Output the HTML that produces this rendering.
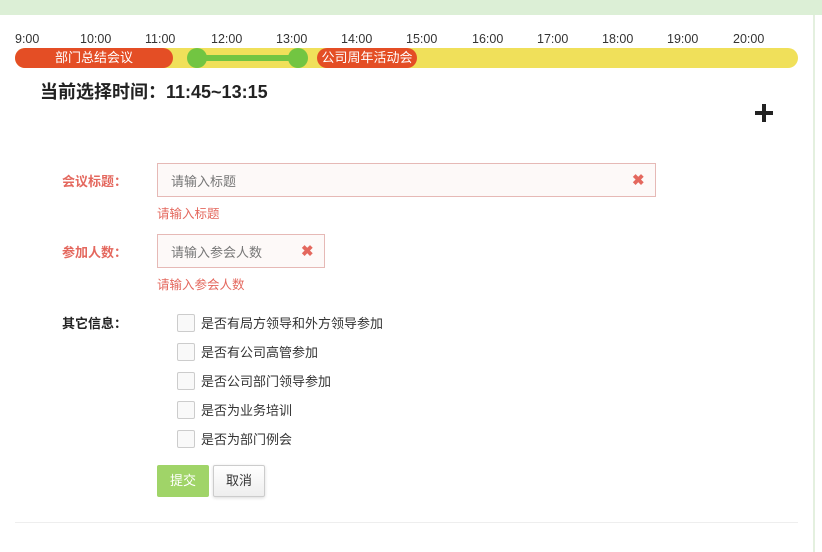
<!DOCTYPE html>
<html><head><meta charset="utf-8"><style>
*{margin:0;padding:0;box-sizing:border-box}
body{width:822px;height:552px;background:#fff;position:relative;overflow:hidden;font-family:"Liberation Sans","Noto Sans CJK SC",sans-serif;font-size:12px;color:#333}
.a{position:absolute}
.top{left:0;top:0;width:822px;height:15px;background:#dcefd6}
.rline{left:813px;top:15px;width:2px;height:537px;background:#e4f0df}
.h{top:32px;font-size:12.5px;color:#333}
.bar{left:15px;top:48px;width:783px;height:20px;background:#f0e05a;border-radius:10px}
.red{height:20px;top:48px;background:#e44e25;border-radius:10px;color:#fff;text-align:center;line-height:20px;font-size:13px}
.dot{width:20px;height:20px;border-radius:50%;background:#72c542;top:48px}
.lbl{font-size:13px;font-weight:bold}
.inp{border:1px solid #e6b9b6;background:#fdf9f8;height:34px;color:#777;font-size:13px;line-height:35px;padding-left:13px}
.x{color:#e4685e;font-size:15px;font-weight:bold}
.err{color:#e4685e;font-size:12.5px}
.cb{width:18px;height:18px;border:1px solid #ccc;background:#f9f9f9;border-radius:2px}
.ct{font-size:13px;color:#333}
</style></head><body>
<div class="a top"></div>
<div class="a rline"></div>
<div class="a h" style="left:15px">9:00</div>
<div class="a h" style="left:80px">10:00</div>
<div class="a h" style="left:145px">11:00</div>
<div class="a h" style="left:211px">12:00</div>
<div class="a h" style="left:276px">13:00</div>
<div class="a h" style="left:341px">14:00</div>
<div class="a h" style="left:406px">15:00</div>
<div class="a h" style="left:472px">16:00</div>
<div class="a h" style="left:537px">17:00</div>
<div class="a h" style="left:602px">18:00</div>
<div class="a h" style="left:667px">19:00</div>
<div class="a h" style="left:733px">20:00</div>
<div class="a bar"></div>
<div class="a red" style="left:15px;width:158px">部门总结会议</div>
<div class="a red" style="left:317px;width:100px">公司周年活动会</div>
<div class="a" style="left:197px;top:55px;width:101px;height:6px;background:#72c542"></div>
<div class="a dot" style="left:187px"></div>
<div class="a dot" style="left:288px"></div>
<div class="a" style="left:40px;top:78px;font-size:18px;font-weight:bold;color:#222">当前选择时间：11:45~13:15</div>
<div class="a" style="left:755px;top:104px;width:18px;height:18px">
<div class="a" style="left:0;top:7px;width:18px;height:4px;background:#222"></div>
<div class="a" style="left:7px;top:0;width:4px;height:18px;background:#222"></div></div>
<div class="a lbl" style="left:62px;top:171px;color:#e4685e">会议标题：</div>
<div class="a inp" style="left:157px;top:163px;width:499px">请输入标题</div>
<div class="a x" style="left:632px;top:171px">✖</div>
<div class="a err" style="left:157px;top:203px">请输入标题</div>
<div class="a lbl" style="left:62px;top:242px;color:#e4685e">参加人数：</div>
<div class="a inp" style="left:157px;top:234px;width:168px">请输入参会人数</div>
<div class="a x" style="left:301px;top:242px">✖</div>
<div class="a err" style="left:157px;top:274px">请输入参会人数</div>
<div class="a lbl" style="left:62px;top:313px;color:#222">其它信息：</div>
<div class="a cb" style="left:177px;top:314px"></div><div class="a ct" style="left:201px;top:313px">是否有局方领导和外方领导参加</div>
<div class="a cb" style="left:177px;top:343px"></div><div class="a ct" style="left:201px;top:342px">是否有公司高管参加</div>
<div class="a cb" style="left:177px;top:372px"></div><div class="a ct" style="left:201px;top:371px">是否公司部门领导参加</div>
<div class="a cb" style="left:177px;top:401px"></div><div class="a ct" style="left:201px;top:400px">是否为业务培训</div>
<div class="a cb" style="left:177px;top:430px"></div><div class="a ct" style="left:201px;top:429px">是否为部门例会</div>
<div class="a" style="left:157px;top:465px;width:52px;height:32px;background:#a0d468;border-radius:2px;color:#fff;text-align:center;line-height:32px;font-size:13px">提交</div>
<div class="a" style="left:213px;top:465px;width:52px;height:32px;background:linear-gradient(#fff,#eee);border:1px solid #ccc;border-radius:2px;box-shadow:0 1px 3px rgba(0,0,0,.15);color:#333;text-align:center;line-height:30px;font-size:13px">取消</div>
<div class="a" style="left:15px;top:522px;width:783px;height:1px;background:#eee"></div>
</body></html>
